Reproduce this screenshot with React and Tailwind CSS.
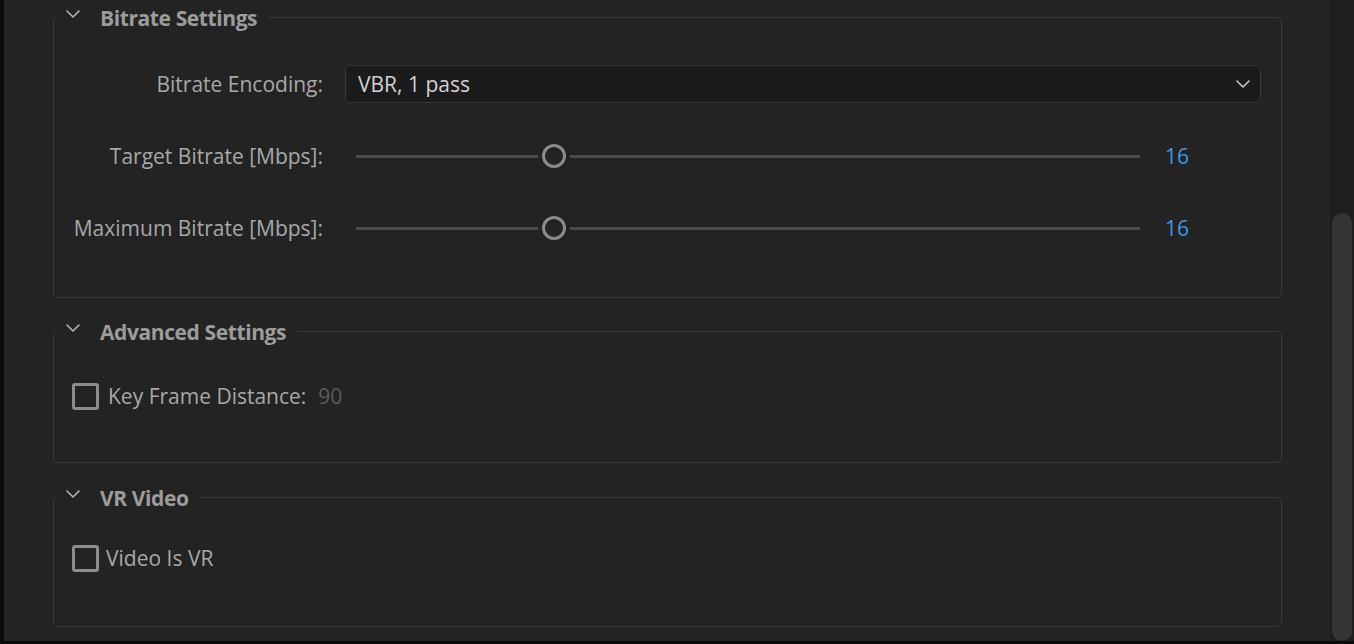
import React from 'react';

function Chevron({ className }) {
  return (
    <svg viewBox="0 0 14 8" className={className} fill="none" stroke="currentColor" strokeWidth="1.6" strokeLinecap="round" strokeLinejoin="round">
      <path d="M1 1l6 6 6-6" />
    </svg>
  );
}

function Section({ title, className, children }) {
  return (
    <fieldset className={`border border-[#383838] rounded-[5px] min-w-0 ${className}`}>
      <legend className="ml-1 pl-2 pr-[11px] h-[30px] flex items-center">
        <Chevron className="w-[14px] h-[8px] text-[#b4b4b4] -mt-[6px]" />
        <span className="ml-[20px] pt-[2px] text-[21px] font-bold tracking-[-0.4px] text-[#9c9c9c] leading-none">{title}</span>
      </legend>
      {children}
    </fieldset>
  );
}

function SliderRow({ label, value, pos }) {
  return (
    <div className="flex items-center h-[38px]">
      <div className="w-[269px] pt-[2px] text-right text-[#a8a8a8]">{label}</div>
      <div className="ml-[22px] flex items-center flex-1">
        <div className="ml-[11px] w-[784px] h-[3px] bg-[#4a4a4a] relative">
          <div
            className="absolute top-1/2 -translate-y-1/2 -translate-x-1/2 w-[24px] h-[24px] rounded-full border-[3px] border-[#8c8c8c] bg-[#232323] shadow-[0_0_0_4px_#232323]"
            style={{ left: pos }}
          />
        </div>
        <div className="ml-[25px] pt-[2px] text-[#3d98e2]">{value}</div>
      </div>
    </div>
  );
}

function Checkbox({ label, extra, gap }) {
  return (
    <div className="flex items-center h-[28px] ml-[18px]">
      <div className="w-[27px] h-[27px] border-[3px] border-[#8c8c8c] rounded-[3px]" />
      <span className={`${gap} pt-[2px] text-[#a8a8a8]`}>{label}</span>
      {extra && <span className="ml-[12px] pt-[2px] text-[#5c5c5c]">{extra}</span>}
    </div>
  );
}

export default function App() {
  return (
    <div className="w-[1354px] h-[644px] bg-[#0b0b0b] pl-1 pb-[3px] font-['Open_Sans',sans-serif] text-[21px] overflow-hidden">
      <div className="flex h-full">
        <main className="flex-1 bg-[#232323] pl-[49px] pr-[48px] pt-[2px]">
          <Section title="Bitrate Settings" className="pt-[33px] pb-[50px] pr-[20px]">
            <div className="flex flex-col gap-[34px]">
              <div className="flex items-center h-[38px]">
                <div className="w-[269px] pt-[2px] text-right text-[#a8a8a8]">Bitrate Encoding:</div>
                <div className="ml-[22px] flex-1 h-[38px] bg-[#1b1b1b] border border-[#383838] rounded-[5px] flex items-center justify-between pl-[12px] pr-[10px]">
                  <span className="pt-[2px] text-[#d2d2d2]">VBR, 1 pass</span>
                  <Chevron className="w-[14px] h-[8px] text-[#c8c8c8]" />
                </div>
              </div>
              <SliderRow label="Target Bitrate [Mbps]:" value="16" pos="198px" />
              <SliderRow label="Maximum Bitrate [Mbps]:" value="16" pos="198px" />
            </div>
          </Section>

          <Section title="Advanced Settings" className="mt-[18px] pt-[36px] pb-[52px]">
            <Checkbox label="Key Frame Distance:" extra="90" gap="ml-[9px]" />
          </Section>

          <Section title="VR Video" className="mt-[19px] pt-[32px] pb-[54px]">
            <Checkbox label="Video Is VR" gap="ml-[7px]" />
          </Section>
        </main>
        <aside className="w-[24px] bg-[#1e1e1e] pt-[213px] pl-[2px] pr-[2px]">
          <div className="h-full rounded-full bg-[#343434]" />
        </aside>
      </div>
    </div>
  );
}
